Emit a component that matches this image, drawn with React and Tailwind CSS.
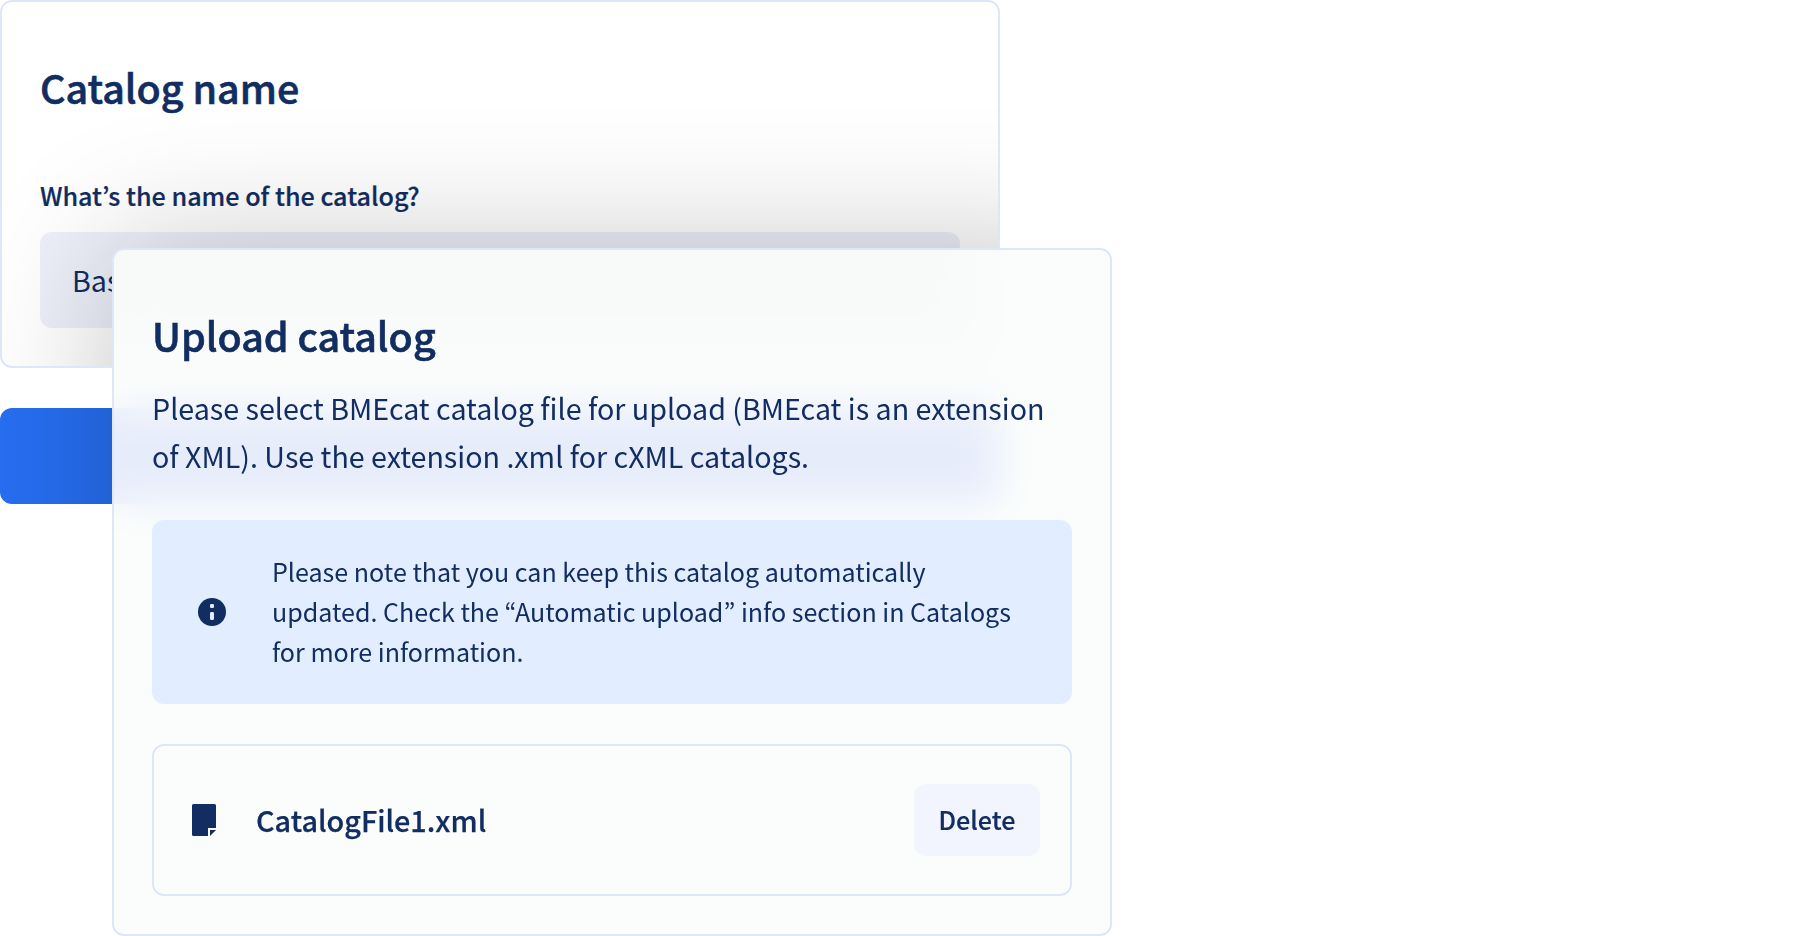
import React from 'react';

const DocumentIcon = () => (
  <svg width="24" height="32" viewBox="0 0 24 32" fill="none" className="shrink-0">
    <path d="M1.5 0h21A1.5 1.5 0 0 1 24 1.5V24h-8v8H1.5A1.5 1.5 0 0 1 0 30.5v-29A1.5 1.5 0 0 1 1.5 0Z" fill="#112d61" />
    <path d="M18 26h6l-6 6v-6Z" fill="#112d61" />
  </svg>
);

const InfoIcon = () => (
  <svg width="28" height="28" viewBox="0 0 28 28" fill="none" className="shrink-0">
    <circle cx="14" cy="14" r="14" fill="#112d61" />
    <rect x="12" y="6" width="4" height="4" rx="1.2" fill="#e2eeff" />
    <rect x="12" y="14" width="4" height="8" rx="1.2" fill="#e2eeff" />
  </svg>
);

const CatalogName = () => (
  <section className="relative h-[368px] w-[1000px] overflow-hidden rounded-xl border-2 border-[#dfe7f6] bg-white px-[38px] pt-[57px]">
    <h2 className="h-14 text-[39.45px] leading-[56px] font-medium [-webkit-text-stroke:0.6px_#112d61]">Catalog name</h2>
    <label className="mt-[60px] block h-10 text-[25.15px] leading-10 font-medium [-webkit-text-stroke:0.2px_#112d61]">
      What’s the name of the catalog?
    </label>
    <div className="mt-[17px] flex h-24 items-center rounded-xl bg-[#edf0f9] px-8 text-[28.65px]">
      <span className="w-10 overflow-hidden">Bas</span>
    </div>
    {/* shadow of the upload panel */}
    <div className="absolute top-[246px] left-[110px] h-[688px] w-[1000px] rounded-xl bg-[#28183c]/8 shadow-[0_0_140px_rgba(0,0,0,0.23)]" />
  </section>
);

const UploadCatalog = () => (
  <section className="absolute top-[248px] left-[112px] h-[688px] w-[1000px] rounded-xl border-2 border-[#dfe7f6] bg-[#fbfdfc]/90 px-[38px] pt-[57px] backdrop-blur-[20px]">
    <h2 className="h-14 text-[39.45px] leading-[56px] font-medium [-webkit-text-stroke:0.6px_#112d61]">Upload catalog</h2>
    <p className="mt-[21px] text-[28.65px] leading-[48px] whitespace-nowrap">
      Please select BMEcat catalog file for upload (BMEcat is an extension
      <br />
      of XML). Use the extension .xml for cXML catalogs.
    </p>

    <div className="mt-10 flex h-[184px] items-center gap-[46px] rounded-xl bg-[#e2eeff] pl-[46px]">
      <InfoIcon />
      <p className="-mt-0.5 text-[25.07px] leading-10 whitespace-nowrap">
        Please note that you can keep this catalog automatically
        <br />
        updated. Check the “Automatic upload” info section in Catalogs
        <br />
        for more information.
      </p>
    </div>

    <div className="mt-10 flex h-[152px] items-center rounded-xl border-2 border-[#dfe7f6] pr-[30px] pl-[38px]">
      <DocumentIcon />
      <span className="ml-10 text-[28.8px] font-medium [-webkit-text-stroke:0.25px_#112d61]">CatalogFile1.xml</span>
      <button className="ml-auto h-[72px] w-[126px] rounded-xl bg-[#f2f4fe] text-[25.1px] font-medium [-webkit-text-stroke:0.2px_#112d61]">
        Delete
      </button>
    </div>
  </section>
);

const App = () => {
  return (
    <main className="relative h-[936px] w-[1800px] overflow-hidden bg-white font-['Noto_Sans_CJK_KR',sans-serif] text-[#112d61]">
      <CatalogName />
      <div className="relative mt-10 h-24 w-[1000px] overflow-hidden rounded-xl bg-[#276ef1]">
        <div className="absolute -top-40 left-[112px] h-[688px] w-[1000px] rounded-xl bg-[#4030f0]/40 shadow-[0_0_140px_rgba(0,0,0,0.23)]" />
      </div>
      <UploadCatalog />
    </main>
  );
};

export default App;
